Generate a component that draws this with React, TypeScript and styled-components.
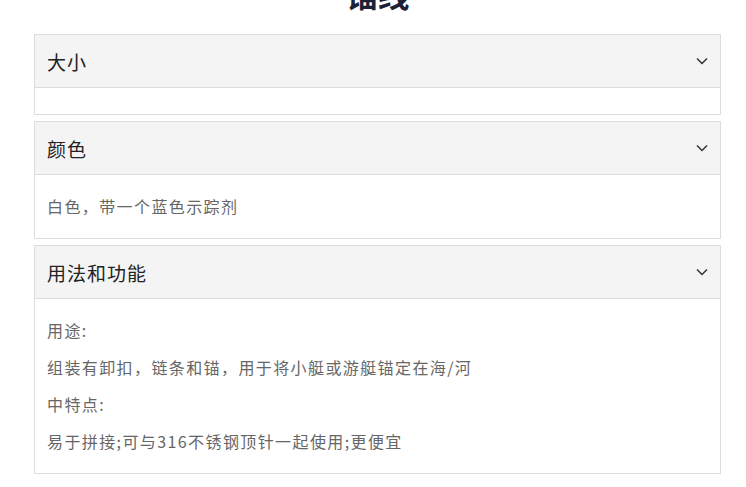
import React from 'react';
import styled, { createGlobalStyle } from 'styled-components';

const GlobalStyle = createGlobalStyle`
  html, body {
    margin: 0;
    padding: 0;
    background: #fff;
    overflow: hidden;
  }
  body {
    font-family: "Noto Sans CJK SC", "Noto Sans", sans-serif;
  }
`;

const Page = styled.div`
  padding: 0 25px 0 34px;
`;

const Title = styled.h1`
  margin: -27px 0 21px;
  font-size: 32px;
  line-height: 40px;
  font-weight: 700;
  text-align: center;
  color: #1b2236;
`;

const Panel = styled.section`
  border: 1px solid #dddddd;
  margin-bottom: 6px;
  background: #fff;
`;

const Header = styled.div`
  height: 52px;
  display: flex;
  align-items: center;
  justify-content: space-between;
  padding: 0 12px 0 12px;
  background: #f4f4f4;
  border-bottom: 1px solid #dddddd;
`;

const HeaderLabel = styled.span`
  font-size: 19px;
  letter-spacing: 1px;
  color: #222;
`;

const Body = styled.div`
  padding: 13px 12px 13px;
  display: flex;
  flex-direction: column;
`;

const Line = styled.p`
  margin: 0;
  font-size: 16px;
  line-height: 37px;
  letter-spacing: 1.4px;
  color: #666;
`;

const Chevron = () => (
  <svg width="12" height="8" viewBox="0 0 12 8" fill="none">
    <polyline points="1,1.5 6,6.5 11,1.5" stroke="#333" strokeWidth="1.5" />
  </svg>
);

type Section = { title: string; lines: string[] };

const sections: Section[] = [
  { title: '大小', lines: [] },
  { title: '颜色', lines: ['白色，带一个蓝色示踪剂'] },
  {
    title: '用法和功能',
    lines: [
      '用途:',
      '组装有卸扣，链条和锚，用于将小艇或游艇锚定在海/河',
      '中特点:',
      '易于拼接;可与316不锈钢顶针一起使用;更便宜',
    ],
  },
];

export default function App() {
  return (
    <Page>
      <GlobalStyle />
      <Title>锚线</Title>
      {sections.map((s) => (
        <Panel key={s.title}>
          <Header>
            <HeaderLabel>{s.title}</HeaderLabel>
            <Chevron />
          </Header>
          <Body>
            {s.lines.map((l) => (
              <Line key={l}>{l}</Line>
            ))}
          </Body>
        </Panel>
      ))}
    </Page>
  );
}
